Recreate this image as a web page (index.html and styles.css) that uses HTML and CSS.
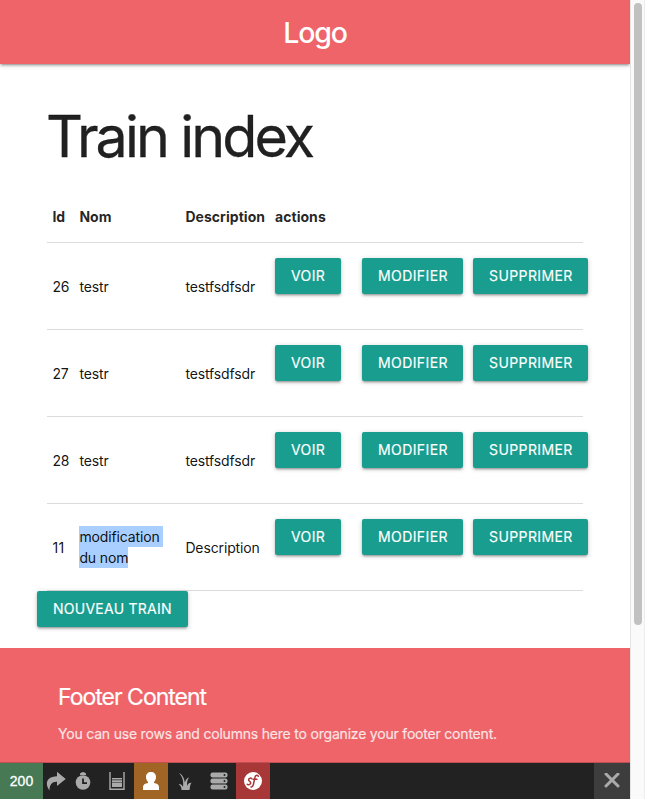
FILE: index.html
```html
<!DOCTYPE html>
<html lang="fr">
<head>
<meta charset="utf-8">
<title>Train index</title>
<link rel="stylesheet" href="styles.css">
</head>
<body>
<div class="page">
  <header class="nav"><span class="logo">Logo</span></header>
  <main class="container">
    <h1>Train index</h1>
    <table>
      <colgroup><col class="c-id"><col class="c-nom"><col class="c-desc"><col></colgroup>
      <thead><tr><th>Id</th><th>Nom</th><th>Description</th><th>actions</th></tr></thead>
      <tbody>
        <tr><td>26</td><td>testr</td><td>testfsdfsdr</td><td><div class="actions"><a class="btn voir">VOIR</a><a class="btn modifier">MODIFIER</a><a class="btn supprimer">SUPPRIMER</a></div></td></tr>
        <tr><td>27</td><td>testr</td><td>testfsdfsdr</td><td><div class="actions"><a class="btn voir">VOIR</a><a class="btn modifier">MODIFIER</a><a class="btn supprimer">SUPPRIMER</a></div></td></tr>
        <tr><td>28</td><td>testr</td><td>testfsdfsdr</td><td><div class="actions"><a class="btn voir">VOIR</a><a class="btn modifier">MODIFIER</a><a class="btn supprimer">SUPPRIMER</a></div></td></tr>
        <tr><td class="eleven">11</td><td><span class="sel first">modification</span><br><span class="sel">du nom</span></td><td>Description</td><td><div class="actions"><a class="btn voir">VOIR</a><a class="btn modifier">MODIFIER</a><a class="btn supprimer">SUPPRIMER</a></div></td></tr>
      </tbody>
    </table>
    <a class="btn nouveau">NOUVEAU TRAIN</a>
  </main>
  <footer class="footer">
    <h5>Footer Content</h5>
    <p>You can use rows and columns here to organize your footer content.</p>
  </footer>
  <div class="toolbar">
    <div class="status">200</div>
    <div class="tool redirect"><svg width="20" height="20" viewBox="0 0 20 20"><path fill="#aaa" d="M11 .8 19.700 8 11 15v-4.300C6 10.500 3.500 13.500 3.500 19.500-1.500 13 .5 5.500 11 5.300z"/></svg></div>
    <div class="tool"><svg width="16" height="20" viewBox="0 0 16 20"><path fill="#aaa" d="M5 2.500Q8-.5 11 2.500V4H5z"/><circle cx="8" cy="11.500" r="7.300" fill="#aaa"/><path fill="none" stroke="#222" stroke-width="1.800" d="M8 7.500v4.700h4"/></svg></div>
    <div class="tool"><svg width="16" height="20" viewBox="0 0 16 20"><path fill="none" stroke="#aaa" stroke-width="1.400" d="M1 1v17.300h14V1"/><path fill="#aaa" d="M3 7h10v1.500H3zM3 9.200h10V16H3z"/><path fill="#666" d="M3 11h10v1H3z"/></svg></div>
    <div class="tool user"><svg width="16" height="18" viewBox="0 0 16 18"><path fill="#fff" d="M8 0c3 0 5 2 5 5 0 2.300-1 4-2 5v1c3 .3 5 2 5 4v3H0v-3c0-2 2-3.700 5-4v-1c-1-1-2-2.700-2-5 0-3 2-5 5-5z"/></svg></div>
    <div class="tool"><svg width="14" height="19" viewBox="0 0 14 19"><path fill="#aaa" d="M1 1c4 2 5.500 6 5.700 9.500C8 7.500 9 6 11 5.500 9 8 9 10.500 9 14c1-2.500 2.500-3.500 4.500-3.300C12 12.500 12 15 11.500 18h-8c0-3-1-4.500-3-6 3 0 4 1.500 4.500 3C5.800 9 4.500 5 1 1z"/></svg></div>
    <div class="tool"><svg width="18" height="18" viewBox="0 0 18 18"><rect x=".5" y=".5" width="17" height="5" rx="2" fill="#aaa"/><rect x=".5" y="6.500" width="17" height="5" rx="2" fill="#aaa"/><rect x=".5" y="12.500" width="17" height="5" rx="2" fill="#aaa"/><g fill="#222"><circle cx="14.500" cy="3" r="1"/><circle cx="14.500" cy="9" r="1"/><circle cx="14.500" cy="15" r="1"/></g></svg></div>
    <div class="tool symfony"><svg width="18" height="18" viewBox="0 0 18 18"><circle cx="9" cy="9" r="9" fill="#fff"/><g fill="none" stroke="#a83838" stroke-linecap="round" stroke-width="1.500"><path d="M7.700 6.600C6.500 5.500 4.200 6.500 4.700 8.200c.4 1.200 2.300 1.400 2 2.900-.3 1.500-2.500 2.200-3.500 1.100"/><path d="M14.300 4.300c-.3-1.700-2.800-1.500-3.300.8L9.500 12c-.4 2-1.500 3.200-2.500 2.900M9 7.300h4"/></g></svg></div>
    <div class="close"><svg width="16" height="16" viewBox="0 0 16 16"><path d="M2 1l12 12M14 1 2 13" fill="none" stroke="#aaa" stroke-width="3" stroke-linecap="round"/></svg></div>
  </div>
</div>
<div class="scrollbar"><div class="thumb"></div></div>
</body>
</html>
```

FILE: styles.css
```css
* { box-sizing: border-box; }
body { margin: 0; width: 645px; height: 799px; overflow: hidden; display: flex; background: #fff; font: 14px/21px Inter, "Liberation Sans", sans-serif; color: rgba(0,0,0,.87); }
.page { width: 630px; height: 799px; display: flex; flex-direction: column; }
.nav { height: 64px; flex: none; background: #ee6469; color: #fff; text-align: center; line-height: 65px; font-size: 28.5px; font-weight: 450; box-shadow: 0 2px 2px 0 rgba(0,0,0,.14), 0 3px 1px -2px rgba(0,0,0,.12), 0 1px 5px 0 rgba(0,0,0,.2); }
.logo { letter-spacing: -1.2px; }
.container { width: 536px; margin-left: 47px; height: 584px; flex: none; }
h1 { margin: 40px 0 22px -1px; height: 65px; font-size: 57.4px; line-height: 65px; font-weight: 400; letter-spacing: -2.9px; white-space: nowrap; -webkit-text-stroke: .3px; }
table { width: 536px; table-layout: fixed; border-collapse: collapse; }
.c-id { width: 27px; }
.c-nom { width: 106px; }
.c-desc { width: 90px; }
tr { border-bottom: 1px solid rgba(0,0,0,.14); }
th, td { padding: 15px 0 15px 5.4px; text-align: left; vertical-align: middle; white-space: nowrap; letter-spacing: -.13px; }
th { height: 51px; font-weight: 650; letter-spacing: .05px; }
td { height: 87px; color: rgba(0,0,0,.93); }
th:last-child, td:last-child { padding-left: 5px; }
td.eleven { letter-spacing: .4px; }
.actions { height: 56px; display: flex; align-items: flex-start; }
.btn { display: inline-block; height: 36px; line-height: 36px; padding-left: 16px; border-radius: 2px; background: #189d8f; color: #fff; letter-spacing: .4px; -webkit-text-stroke: .15px; white-space: nowrap; flex: none; box-shadow: 0 2px 2px 0 rgba(0,0,0,.14), 0 3px 1px -2px rgba(0,0,0,.12), 0 1px 5px 0 rgba(0,0,0,.2); }
.voir { width: 66px; margin-right: 21px; }
.modifier { width: 101px; margin-right: 10px; }
.supprimer { width: 115px; }
.nouveau { width: 151px; margin-left: -10px; position: relative; letter-spacing: .25px; }
.sel { display: inline-block; background: #a8cfff; height: 21px; vertical-align: top; }
.sel.first { width: 84px; }
.footer { height: 115px; flex: none; padding: 37px 0 0 58px; background: #ee6469; color: #fff; border-bottom: 1px solid #bd4f55; }
h5 { margin: 0 0 13px; height: 25px; font-size: 23px; line-height: 25px; font-weight: 400; letter-spacing: -1px; -webkit-text-stroke: .2px; }
.footer p { margin: 0; color: #fbe5e6; letter-spacing: -.2px; white-space: nowrap; -webkit-text-stroke: .15px; }
.toolbar { height: 36px; display: flex; background: #222; }
.status { width: 43px; background: #467954; color: #fff; text-align: center; line-height: 36px; font-family: "Liberation Sans", sans-serif; -webkit-text-stroke: .3px #fff; }
.tool { width: 34px; display: flex; align-items: center; justify-content: center; }
.redirect { width: 26px; }
.redirect + .tool { width: 28px; }
.redirect + .tool + .tool { width: 37px; padding-left: 2px; }
.user { background: #a06424; }
.symfony { background: #a83838; }
.close { width: 36px; margin-left: auto; display: flex; align-items: center; justify-content: center; background: #3d3d3d; }
.scrollbar { width: 15px; height: 799px; background: #fafafa; border-left: 1px solid #e5e5e5; border-right: 1px solid #ededed; padding: 3px 0 0 3px; }
.thumb { width: 8px; height: 622px; border-radius: 4px; background: #c1c1c1; }
```
